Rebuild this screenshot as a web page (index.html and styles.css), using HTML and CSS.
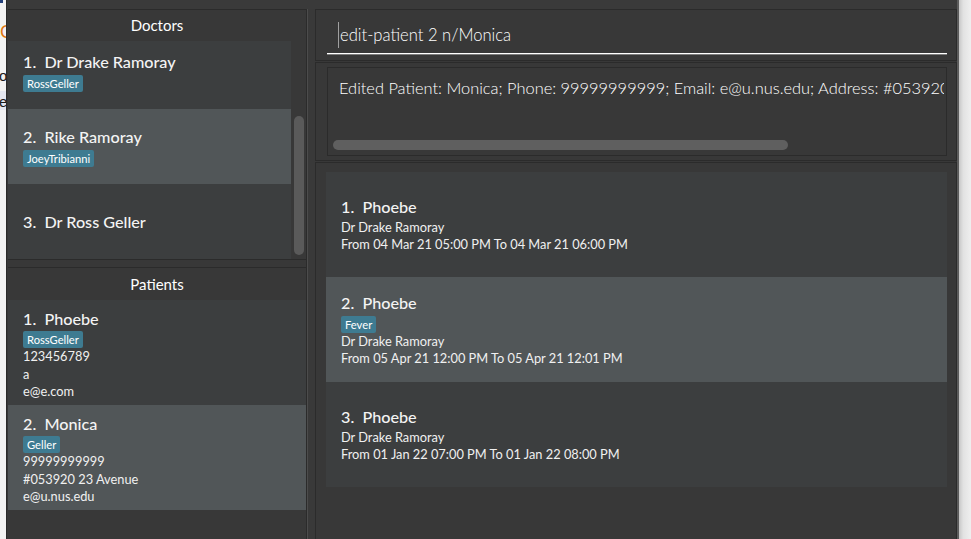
FILE: index.html
```html
<!DOCTYPE html>
<html lang="en">
<head>
<meta charset="utf-8">
<title>Clinic</title>
<link rel="stylesheet" href="styles.css">
</head>
<body>
<div class="desk">
  <div class="behind">
    <div class="frag-blue"></div>
    <div class="frag frag-c">C</div>
    <div class="frag frag-o">o</div>
    <div class="frag-band"><span class="frag frag-e">e</span></div>
  </div>
  <div class="window">
    <div class="menubar"></div>
    <div class="main">
      <div class="left">
        <section class="doctors">
          <div class="panel-title">Doctors</div>
          <div class="dlist">
            <div class="dcells">
              <div class="cell even doc">
                <div class="name">1.  Dr Drake Ramoray</div>
                <div class="tags"><span class="tag">RossGeller</span></div>
              </div>
              <div class="cell odd doc">
                <div class="name">2.  Rike Ramoray</div>
                <div class="tags"><span class="tag">JoeyTribianni</span></div>
              </div>
              <div class="cell even doc">
                <div class="name">3.  Dr Ross Geller</div>
              </div>
            </div>
            <div class="vscroll"><div class="vthumb"></div></div>
          </div>
        </section>
        <section class="patients">
          <div class="panel-title tall">Patients</div>
          <div class="plist">
            <div class="cell even pat">
              <div class="name">1.  Phoebe</div>
              <div class="tags"><span class="tag">RossGeller</span></div>
              <div class="line">123456789</div>
              <div class="line">a</div>
              <div class="line">e@e.com</div>
            </div>
            <div class="cell odd pat">
              <div class="name">2.  Monica</div>
              <div class="tags"><span class="tag">Geller</span></div>
              <div class="line">99999999999</div>
              <div class="line">#053920 23 Avenue</div>
              <div class="line">e@u.nus.edu</div>
            </div>
          </div>
        </section>
      </div>
      <div class="divider"></div>
      <div class="right">
        <section class="cmd">
          <div class="field"><span class="caret"></span>edit-patient 2 n/Monica</div>
        </section>
        <section class="result">
          <div class="result-box">
            <div class="result-view">
              <div class="result-text">Edited Patient: Monica; Phone: 99999999999; Email: e@u.nus.edu; Address: #053920 23 Avenue; Tags: [Geller]</div>
            </div>
            <div class="hscroll"><div class="hthumb"></div></div>
          </div>
        </section>
        <section class="appts">
          <div class="cell even appt">
            <div class="name">1.  Phoebe</div>
            <div class="line">Dr Drake Ramoray</div>
            <div class="line">From 04 Mar 21 05:00 PM To 04 Mar 21 06:00 PM</div>
          </div>
          <div class="cell odd appt">
            <div class="name">2.  Phoebe</div>
            <div class="tags"><span class="tag">Fever</span></div>
            <div class="line">Dr Drake Ramoray</div>
            <div class="line">From 05 Apr 21 12:00 PM To 05 Apr 21 12:01 PM</div>
          </div>
          <div class="cell even appt">
            <div class="name">3.  Phoebe</div>
            <div class="line">Dr Drake Ramoray</div>
            <div class="line">From 01 Jan 22 07:00 PM To 01 Jan 22 08:00 PM</div>
          </div>
        </section>
      </div>
    </div>
  </div>
  <div class="shade"></div>
</div>
</body>
</html>
```
FILE: styles.css
```css
html, body {
  margin: 0;
  padding: 0;
}
body {
  width: 971px;
  height: 539px;
  overflow: hidden;
  background: #f0f0f0;
  font-family: Lato, "Open Sans", sans-serif;
}
.desk {
  display: flex;
  height: 539px;
}

/* window behind, on the left */
.behind {
  width: 6px;
  flex: none;
  overflow: hidden;
  background: #f3f3f3;
  font-family: "Liberation Sans", sans-serif;
  color: #1a1a1a;
}
.frag-blue {
  width: 3px;
  height: 3px;
  background: #24407a;
}
.frag {
  display: block;
  white-space: nowrap;
}
.frag-c {
  margin-top: 18px;
  font-size: 18px;
  line-height: 22px;
  color: #e0780f;
}
.frag-o {
  margin-top: 24px;
  font-size: 15px;
  line-height: 18px;
  margin-left: -1px;
}
.frag-band {
  margin-top: 6px;
  height: 19px;
  background: #e4e6f0;
  overflow: hidden;
}
.frag-e {
  font-size: 15px;
  line-height: 19px;
  margin-left: -1px;
  padding-top: 1px;
}

/* main window */
.window {
  width: 953px;
  flex: none;
  box-sizing: border-box;
  border-left: 1px solid #2a2a2a;
  border-right: 2px solid #5c5c5c;
  background: #383838;
  display: flex;
  flex-direction: column;
  color: #ffffff;
}
.menubar {
  height: 9px;
  flex: none;
  background: #3a3a3a;
}
.main {
  flex: 1;
  display: flex;
  min-height: 0;
}
.left {
  width: 300px;
  flex: none;
  box-sizing: border-box;
  border-right: 1px solid #2b2b2b;
  padding-left: 1px;
  display: flex;
  flex-direction: column;
}
.divider {
  width: 8px;
  flex: none;
  box-sizing: border-box;
  border-left: 1px solid #4c4c4c;
  background: #393939;
}
.right {
  flex: 1;
  display: flex;
  flex-direction: column;
  gap: 1px;
  min-width: 0;
}

.panel-title {
  height: 31px;
  line-height: 31px;
  text-align: center;
  font-size: 15px;
  color: #ffffff;
}
.panel-title.tall {
  height: 32px;
  line-height: 32px;
}

/* doctors */
.doctors {
  flex: none;
  border-top: 1px solid #2b2b2b;
}
.dlist {
  height: 218px;
  display: flex;
  overflow: hidden;
  border-bottom: 1px solid #2b2b2b;
}
.dcells {
  width: 283px;
  flex: none;
  margin-top: -7px;
}
.vscroll {
  flex: 1;
  padding: 75px 0 4px 3px;
  box-sizing: border-box;
}
.vthumb {
  width: 10px;
  height: 139px;
  border-radius: 5px;
  background: #5a5a5a;
}

/* patients */
.patients {
  flex: 1;
  margin-top: 7px;
  border-top: 1px solid #2b2b2b;
  min-height: 0;
}

/* cells */
.cell {
  box-sizing: border-box;
  padding-left: 15px;
  display: flex;
  flex-direction: column;
}
.cell.even {
  background: #3c3e3f;
}
.cell.odd {
  background: #515658;
}
.doc {
  height: 75px;
  justify-content: center;
}
.pat {
  height: 105px;
  padding-top: 8px;
}
.appt {
  height: 105px;
  justify-content: center;
}
.name {
  font-size: 16.2px;
  font-weight: 500;
  line-height: 21px;
  white-space: pre;
  color: #f4f4f4;
}
.tags {
  display: flex;
  gap: 4px;
  margin-top: 3px;
}
.pat .tags {
  margin-top: 2px;
}
.tag {
  font-size: 11.2px;
  line-height: 15px;
  padding: 1px 4px;
  border-radius: 2px;
  background: #3e7b91;
  color: #ffffff;
}
.line {
  font-size: 12.8px;
  line-height: 17.5px;
  color: #f0f0f0;
  white-space: nowrap;
}
.name + .line {
  margin-top: 2px;
}

/* command box */
.cmd {
  height: 52px;
  flex: none;
  box-sizing: border-box;
  border: 1px solid #2b2b2b;
  padding: 7px 9px 5px 11px;
}
.field {
  height: 37px;
  box-sizing: border-box;
  border-bottom: 1px solid #ffffff;
  box-shadow: 0 1px 0 rgba(255, 255, 255, 0.35);
  padding-left: 11px;
  display: flex;
  align-items: center;
  font-size: 16.6px;
  font-weight: 300;
  color: #ffffff;
  white-space: nowrap;
}
.caret {
  width: 1px;
  height: 26px;
  background: #a0a0a0;
  margin-right: 1px;
  flex: none;
}

/* result display */
.result {
  height: 99px;
  flex: none;
  box-sizing: border-box;
  border: 1px solid #2b2b2b;
  padding: 4px 9px 4px 11px;
}
.result-box {
  height: 89px;
  box-sizing: border-box;
  border: 1px solid #2b2b2b;
  display: flex;
  flex-direction: column;
  overflow: hidden;
}
.result-view {
  flex: 1;
  margin: 0 2px 0 11px;
  overflow: hidden;
}
.result-text {
  padding-top: 9px;
  font-size: 16.4px;
  font-weight: 300;
  line-height: 22px;
  white-space: nowrap;
  color: #ffffff;
}
.hscroll {
  padding: 0 0 5px 5px;
}
.hthumb {
  width: 455px;
  height: 10px;
  border-radius: 5px;
  background: #5f5f5f;
}

/* appointments */
.appts {
  flex: 1;
  box-sizing: border-box;
  border: 1px solid #2b2b2b;
  border-bottom: none;
  padding: 9px 9px 0 10px;
  min-height: 0;
}

.shade {
  flex: 1;
  background: linear-gradient(to right, #c6c6c6, #e2e2e2 35%, #efefef);
}
```
